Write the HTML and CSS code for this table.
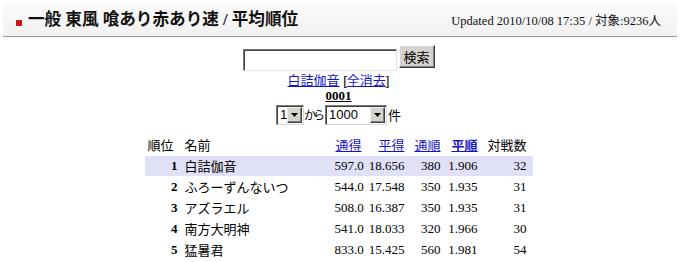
FILE: index.html
```html
<!DOCTYPE html>
<html lang="ja">
<head>
<meta charset="utf-8">
<title>平均順位</title>
<link rel="stylesheet" href="styles.css">
</head>
<body>
<div class="page">
  <div class="head">
    <h1 class="title"><span class="mark"></span>一般 東風 喰あり赤あり速 / 平均順位</h1>
    <div class="updated">Updated 2010/10/08 17:35 / 対象:9236人</div>
  </div>
  <div class="main">
    <form class="search">
      <input class="q" type="text">
      <button class="btn" type="button">検索</button>
    </form>
    <div class="links"><a href="#">白詰伽音</a> [<a href="#">全消去</a>]</div>
    <div class="pno">0001</div>
    <div class="range">
      <span class="sel s1"><span class="val">1</span><span class="arr"><svg width="7" height="4" viewBox="0 0 7 4"><path d="M0 0H7L3.5 4Z" fill="#000"/></svg></span></span>
      <span class="jp kara">から</span>
      <span class="sel s2"><span class="val">1000</span><span class="arr"><svg width="7" height="4" viewBox="0 0 7 4"><path d="M0 0H7L3.5 4Z" fill="#000"/></svg></span></span>
      <span class="jp ken">件</span>
    </div>
    <table class="rank">
      <colgroup>
        <col class="c1"><col class="c2"><col class="c3"><col class="c4"><col class="c5"><col class="c6"><col class="c7">
      </colgroup>
      <thead>
        <tr>
          <th class="l">順位</th>
          <th class="l">名前</th>
          <th><a href="#">通得</a></th>
          <th><a href="#">平得</a></th>
          <th><a href="#">通順</a></th>
          <th><a href="#" class="cur">平順</a></th>
          <th>対戦数</th>
        </tr>
      </thead>
      <tbody>
        <tr class="me"><td class="no">1</td><td class="nm">白詰伽音</td><td>597.0</td><td>18.656</td><td>380</td><td>1.906</td><td class="last">32</td></tr>
        <tr><td class="no">2</td><td class="nm">ふろーずんないつ</td><td>544.0</td><td>17.548</td><td>350</td><td>1.935</td><td class="last">31</td></tr>
        <tr><td class="no">3</td><td class="nm">アズラエル</td><td>508.0</td><td>16.387</td><td>350</td><td>1.935</td><td class="last">31</td></tr>
        <tr><td class="no">4</td><td class="nm">南方大明神</td><td>541.0</td><td>18.033</td><td>320</td><td>1.966</td><td class="last">30</td></tr>
        <tr><td class="no">5</td><td class="nm">猛暑君</td><td>833.0</td><td>15.425</td><td>560</td><td>1.981</td><td class="last">54</td></tr>
      </tbody>
    </table>
  </div>
</div>
</body>
</html>
```
FILE: styles.css
```css
* { box-sizing: border-box; }
body {
  margin: 0;
  background: #fff;
  color: #000;
  font-family: "Liberation Serif", "Noto Sans CJK JP", serif;
  font-size: 13px;
}
.page { padding: 3px 6px 0 3px; }

.head {
  display: flex;
  align-items: center;
  justify-content: space-between;
  height: 34px;
  background: linear-gradient(#fbfbfb, #f1f1f1);
  border-bottom: 1px solid #9c9c9c;
  padding: 0 16px 0 13px;
}
.title {
  margin: 0;
  display: flex;
  align-items: center;
  font-family: "Liberation Serif", "Noto Sans CJK JP", sans-serif;
  font-size: 16.6px;
  font-weight: bold;
  color: #111;
  line-height: 24px;
}
.mark {
  width: 6px;
  height: 6px;
  background: #c41818;
  margin: 6px 6px 0 0;
}
.updated {
  font-size: 12.5px;
  line-height: 20px;
  padding-top: 3px;
  color: #111;
}

.main { padding-right: 3px; }

.search {
  margin: 7px 0 0;
  height: 28px;
  display: flex;
  justify-content: center;
  align-items: flex-start;
}
.q {
  width: 154px;
  height: 22px;
  margin: 5px 0 0;
  padding: 0 2px;
  border: 1px solid;
  border-color: #7a7a7a #e4e4e4 #e4e4e4 #7a7a7a;
  box-shadow: inset 1px 1px 0 #404040;
  background: #fff;
}
.btn {
  width: 36px;
  height: 23px;
  margin: 1px 0 0 2px;
  padding: 0;
  background: #d6d3ce;
  border: 1px solid;
  border-color: #fff #404040 #404040 #fff;
  box-shadow: inset -1px -1px 0 #808080;
  font-family: "Noto Sans CJK JP", sans-serif;
  font-size: 13px;
  line-height: 19px;
  color: #000;
}

a { color: #1414c8; text-decoration: underline; }

.links {
  text-align: center;
  font-family: "Liberation Sans", "Noto Sans CJK JP", sans-serif;
  font-size: 13px;
  line-height: 17px;
  height: 17px;
}
.pno {
  text-align: center;
  font-weight: bold;
  text-decoration: underline;
  line-height: 14px;
  height: 15px;
}

.range {
  display: flex;
  justify-content: center;
  align-items: center;
  height: 21px;
  font-family: "Liberation Sans", "Noto Sans CJK JP", sans-serif;
  font-size: 13px;
}
.jp { font-family: "Noto Sans CJK JP", sans-serif; line-height: 20px; }
.kara { font-size: 12px; letter-spacing: -3px; padding: 0 3px 0 0; }
.ken { margin-left: 1px; }
.sel {
  display: inline-flex;
  align-items: center;
  height: 20px;
  border: 1px solid;
  border-color: #7a7a7a #d8d8d8 #d8d8d8 #7a7a7a;
  box-shadow: inset 1px 1px 0 #404040;
  background: #fff;
  padding: 1px 1px 0 2px;
}
.s1 { width: 28px; }
.s2 { width: 62px; }
.val { flex: 1; line-height: 16px; padding-left: 1px; }
.arr {
  width: 15px;
  height: 16px;
  background: #d6d3ce;
  border: 1px solid;
  border-color: #f0f0f0 #404040 #404040 #f0f0f0;
  box-shadow: inset -1px -1px 0 #808080;
  display: flex;
  align-items: center;
  justify-content: center;
}

.rank {
  margin: 9px auto 0;
  width: 388px;
  table-layout: fixed;
  border-collapse: separate;
  border-spacing: 0 1px;
}
.c1 { width: 37px; }
.c2 { width: 150px; }
.c3 { width: 33px; }
.c4 { width: 43px; }
.c5 { width: 36px; }
.c6 { width: 37px; }
.c7 { width: 52px; }
.rank th, .rank td {
  height: 20px;
  padding: 0 3px;
  line-height: 20px;
  white-space: nowrap;
  text-align: right;
  vertical-align: middle;
  color: #000;
}
.rank th {
  font-family: "Noto Sans CJK JP", sans-serif;
  font-weight: normal;
  font-size: 13px;
}
.rank th.l { text-align: left; }
.rank th a { color: #1414c8; }
.rank th .cur { font-weight: bold; }
.rank td { font-size: 13px; }
.rank td.no { font-weight: bold; padding-right: 4px; }
.rank td.nm {
  text-align: left;
  font-family: "Noto Sans CJK JP", sans-serif;
}
.rank th:last-child, .rank td.last { padding-right: 6px; }
.rank tr.me td { background: #e0e0f7; }
```
